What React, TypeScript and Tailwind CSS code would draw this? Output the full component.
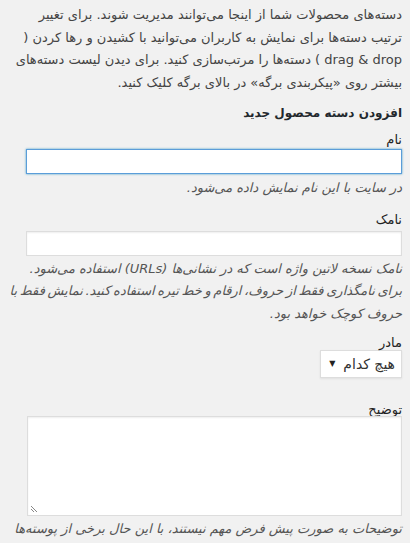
import React from "react";

const Field = ({ label, className, children }: { label: string; className: string; children: React.ReactNode }) => (
  <div className={className}>
    <label className="block text-[13px] leading-[18px] text-[#222]">{label}</label>
    {children}
  </div>
);

const App = () => {
  return (
    <div
      dir="rtl"
      className="w-[410px] h-[543px] overflow-hidden bg-[#f1f1f1] pr-[8px] pl-[8px] pt-[4px] text-[#444]"
      style={{ fontFamily: '"DejaVu Sans", Tahoma, sans-serif' }}
    >
      <p className="text-[13px] leading-[22.7px]">
        دسته‌های محصولات شما از اینجا می‌توانند مدیریت شوند. برای تغییر ترتیب دسته‌ها برای نمایش به کاربران
        می‌توانید با کشیدن و رها کردن ( drag &amp; drop ) دسته‌ها را مرتب‌سازی کنید. برای دیدن لیست دسته‌های
        بیشتر روی «پیکربندی برگه» در بالای برگه کلیک کنید.
      </p>
      <h2 className="mt-[9px] text-[12px] leading-[19px] font-bold text-[#23282d]">افزودن دسته محصول جدید</h2>

      <Field label="نام" className="mt-[8px]">
        <input
          type="text"
          className="block w-[376px] h-[25px] bg-white border border-[#5b9dd9] shadow-[0_0_2px_rgba(30,140,190,0.8)] outline-none"
        />
        <p className="mt-[4px] text-[13px] leading-[19px] italic text-[#555]">در سایت با این نام نمایش داده می‌شود.</p>
      </Field>

      <Field label="نامک" className="mt-[14px]">
        <input
          type="text"
          className="block mt-[2px] w-[376px] h-[25px] bg-white border border-[#ddd] shadow-[inset_0_1px_2px_rgba(0,0,0,0.07)] outline-none"
        />
        <p className="mt-[2px] text-[13px] leading-[22.5px] italic text-[#555]">
          <span className="block whitespace-nowrap">نامک نسخه لاتین واژه است که در نشانی‌ها (URLs) استفاده می‌شود.</span>
          <span className="block whitespace-nowrap [word-spacing:-1.5px]">
            برای نامگذاری فقط از حروف، ارقام و خط تیره استفاده کنید. نمایش فقط با
          </span>
          <span className="block whitespace-nowrap">حروف کوچک خواهد بود.</span>
        </p>
      </Field>

      <Field label="مادر" className="mt-[9px]">
        <div className="mt-[-2px] flex h-[28px] w-[82px] items-center gap-[8px] border border-[#ddd] bg-white px-[6px] shadow-[0_1px_2px_rgba(0,0,0,0.07)]">
          <span className="text-[14px] text-[#333]">هیچ کدام</span>
          <span className="text-[8px] text-[#222]">▼</span>
        </div>
      </Field>

      <Field label="توضیح" className="mt-[23px]">
        <div className="relative mt-[-3px] w-[375px] h-[100px] bg-white border border-[#ddd] shadow-[inset_0_1px_2px_rgba(0,0,0,0.07)]">
          <svg className="absolute left-[2px] bottom-[2px]" width="8" height="8" viewBox="0 0 8 8">
            <path d="M1 1 L7 7 M1 4 L4 7" stroke="#888" strokeWidth="1" />
          </svg>
        </div>
        <p className="mt-[2px] text-[13px] leading-[22.5px] italic text-[#555] whitespace-nowrap">
          توضیحات به صورت پیش فرض مهم نیستند، با این حال برخی از پوسته‌ها
        </p>
      </Field>
    </div>
  );
};

export default App;
